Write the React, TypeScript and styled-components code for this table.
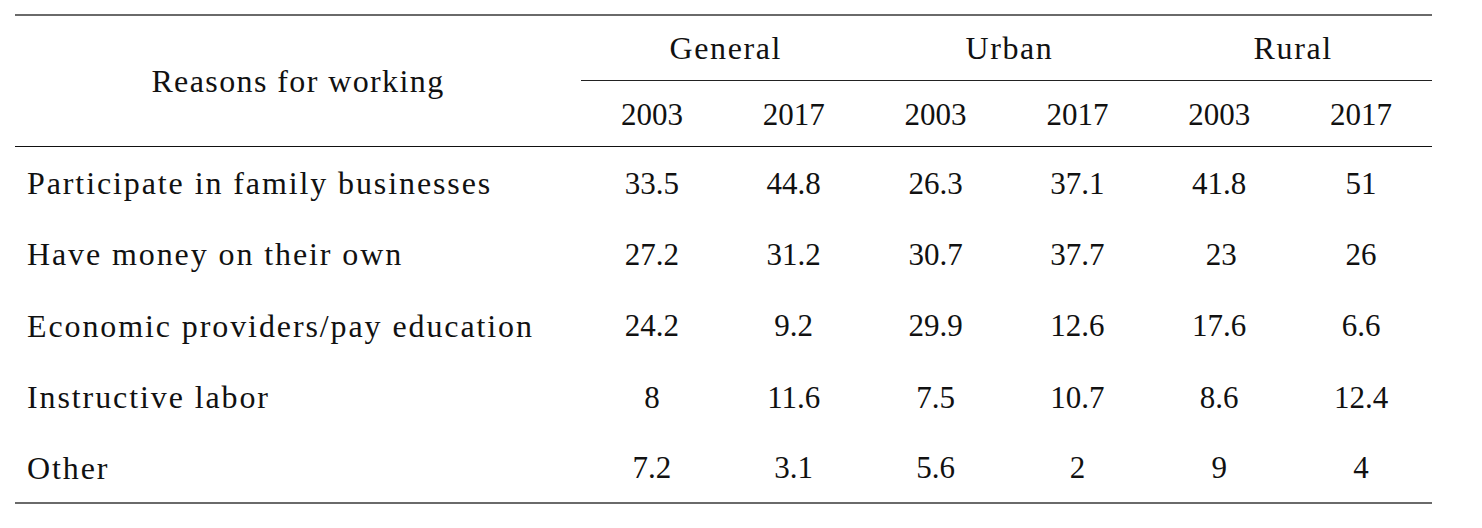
import React from "react";
import styled, { createGlobalStyle } from "styled-components";

const GlobalStyle = createGlobalStyle`
  html, body {
    margin: 0;
    padding: 0;
    background: #ffffff;
  }
  body {
    font-family: "Liberation Serif", "Times New Roman", serif;
    color: #111111;
  }
`;

const Page = styled.div`
  padding: 14px 0 0 15px;
`;

const Table = styled.table`
  width: 1417px;
  border-collapse: collapse;
  table-layout: fixed;
  font-family: "Liberation Serif", "Times New Roman", serif;
  font-size: 31px;
  color: #111111;
  border-top: 2px solid #6a6a6a;
  border-bottom: 2px solid #6a6a6a;
`;

const LabelCol = styled.col`
  width: 566px;
`;

const DataCol = styled.col`
  width: 141.83px;
`;

const CornerHead = styled.th`
  font-weight: normal;
  font-size: 32px;
  text-align: center;
  vertical-align: middle;
  letter-spacing: 1.4px;
  border-bottom: 1px solid #111111;
  padding: 0;
`;

const GroupHead = styled.th`
  font-weight: normal;
  font-size: 32px;
  text-align: center;
  height: 64px;
  padding: 0 0 0 6px;
  letter-spacing: 1.6px;
  border-bottom: 1px solid #222222;
`;

const YearHead = styled.th`
  font-weight: normal;
  text-align: center;
  height: 63px;
  padding: 2px 0 0 0;
  border-bottom: 1px solid #111111;
`;

const BodyRow = styled.tr`
  height: 71.3px;
`;

const LabelCell = styled.td`
  text-align: left;
  font-size: 32px;
  padding: 3px 0 0 12px;
  letter-spacing: 1.9px;
  white-space: nowrap;
`;

const ValueCell = styled.td<{ $shift?: number }>`
  text-align: center;
  padding: 3px 0 0 ${(p) => (p.$shift ? p.$shift * 2 : 0)}px;
`;

type Row = { label: string; values: string[] };

const rows: Row[] = [
  { label: "Participate in family businesses", values: ["33.5", "44.8", "26.3", "37.1", "41.8", "51"] },
  { label: "Have money on their own", values: ["27.2", "31.2", "30.7", "37.7", "23", "26"] },
  { label: "Economic providers/pay education", values: ["24.2", "9.2", "29.9", "12.6", "17.6", "6.6"] },
  { label: "Instructive labor", values: ["8", "11.6", "7.5", "10.7", "8.6", "12.4"] },
  { label: "Other", values: ["7.2", "3.1", "5.6", "2", "9", "4"] },
];

const groups = ["General", "Urban", "Rural"];
const years = ["2003", "2017"];

export default function App() {
  return (
    <>
      <GlobalStyle />
      <Page>
        <Table>
          <colgroup>
            <LabelCol />
            {Array.from({ length: 6 }).map((_, i) => (
              <DataCol key={i} />
            ))}
          </colgroup>
          <thead>
            <tr>
              <CornerHead rowSpan={2}>Reasons for working</CornerHead>
              {groups.map((g) => (
                <GroupHead key={g} colSpan={2}>
                  {g}
                </GroupHead>
              ))}
            </tr>
            <tr>
              {groups.map((g) =>
                years.map((y) => <YearHead key={g + y}>{y}</YearHead>)
              )}
            </tr>
          </thead>
          <tbody>
            {rows.map((r) => (
              <BodyRow key={r.label}>
                <LabelCell>{r.label}</LabelCell>
                {r.values.map((v, i) => (
                  <ValueCell key={i} $shift={r.label.startsWith("Have") && i === 4 ? 2 : 0}>
                    {v}
                  </ValueCell>
                ))}
              </BodyRow>
            ))}
          </tbody>
        </Table>
      </Page>
    </>
  );
}
